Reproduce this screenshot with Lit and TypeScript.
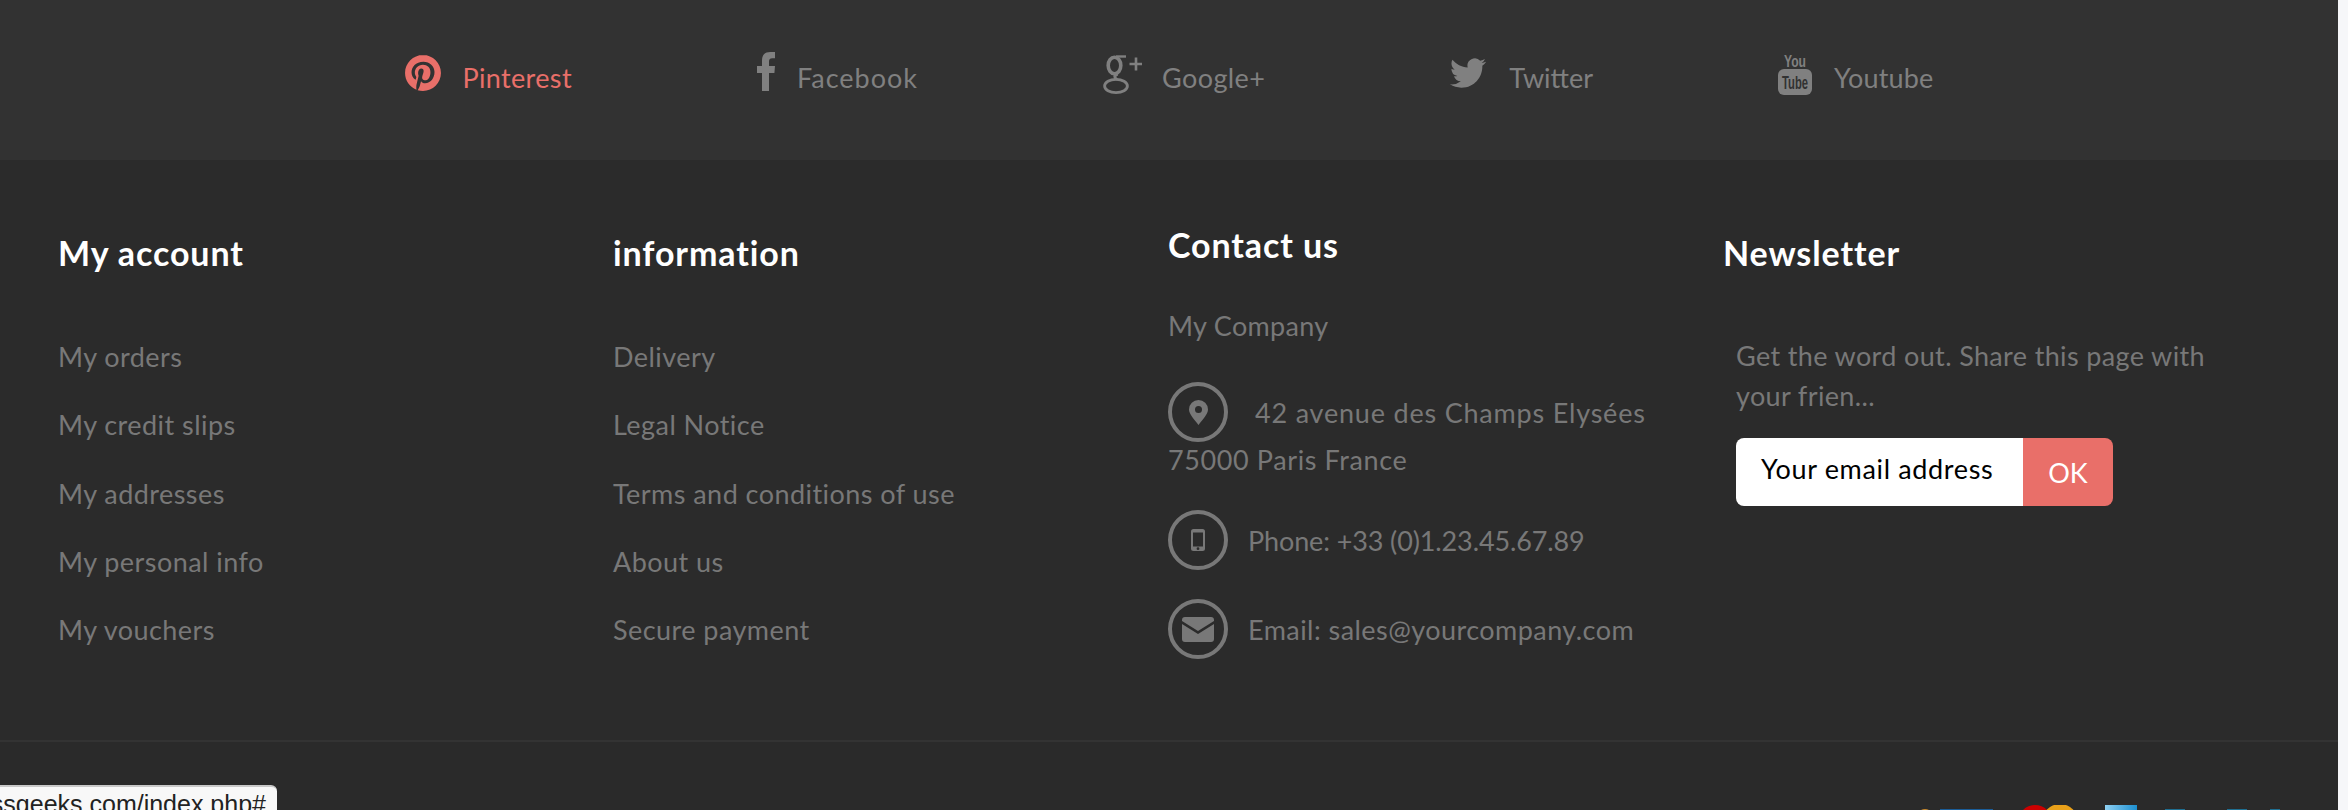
import { LitElement, html, css, svg } from "lit";
import { customElement } from "lit/decorators.js";

const pinterest = svg`<path d="M12.017 0C5.396 0 .029 5.367.029 11.987c0 5.079 3.158 9.417 7.618 11.162-.105-.949-.199-2.403.041-3.439.219-.937 1.406-5.957 1.406-5.957s-.359-.72-.359-1.781c0-1.663.967-2.911 2.168-2.911 1.024 0 1.518.769 1.518 1.688 0 1.029-.653 2.567-.992 3.992-.285 1.193.6 2.165 1.775 2.165 2.128 0 3.768-2.245 3.768-5.487 0-2.861-2.063-4.869-5.008-4.869-3.41 0-5.409 2.562-5.409 5.199 0 1.033.394 2.143.889 2.741.099.12.112.225.085.345-.09.375-.293 1.199-.334 1.363-.053.225-.172.271-.401.165-1.495-.69-2.433-2.878-2.433-4.646 0-3.776 2.748-7.252 7.92-7.252 4.158 0 7.392 2.967 7.392 6.923 0 4.135-2.607 7.462-6.233 7.462-1.214 0-2.354-.629-2.758-1.379l-.749 2.848c-.269 1.045-1.004 2.352-1.498 3.146 1.123.345 2.306.535 3.55.535 6.607 0 11.985-5.365 11.985-11.987C23.97 5.39 18.592.026 11.985.026L12.017 0z"/>`;
const twitter = svg`<path d="M23.953 4.57a10 10 0 01-2.825.775 4.958 4.958 0 002.163-2.723c-.951.555-2.005.959-3.127 1.184a4.92 4.92 0 00-8.384 4.482C7.69 8.095 4.067 6.13 1.64 3.162a4.822 4.822 0 00-.666 2.475c0 1.71.87 3.213 2.188 4.096a4.904 4.904 0 01-2.228-.616v.06a4.923 4.923 0 003.946 4.827 4.996 4.996 0 01-2.212.085 4.936 4.936 0 004.604 3.417 9.867 9.867 0 01-6.102 2.105c-.39 0-.779-.023-1.17-.067a13.995 13.995 0 007.557 2.209c9.053 0 13.998-7.496 13.998-13.985 0-.21 0-.42-.015-.63A9.935 9.935 0 0024 4.59z"/>`;

const socials = [
  { name: "Pinterest", cls: "pin", active: true, w: 36, h: 36, vb: "0 0 24 24", gap: 22, ls: 0.35, body: pinterest },
  { name: "Facebook", cls: "fb", active: false, w: 18, h: 39, vb: "0 0 18 39", gap: 22, ls: 1,
    body: svg`<path d="M12 39V21h5.4l.6-7h-6V9.6c0-2.100.6-3.400 3.300-3.400H18V0h-4.600C7.500 0 5 3.200 5 8.600V14H0v7h5v18z"/>` },
  { name: "Google+", cls: "gp", active: false, w: 39, h: 39, vb: "0 0 39 39", gap: 20, ls: 0.4,
    body: svg`<g fill="none" stroke="currentColor">
      <ellipse cx="11.500" cy="10.500" rx="6.300" ry="8.300" stroke-width="3.600"/>
      <path d="M13 1.500h10" stroke-width="2.400"/>
      <path d="M14.500 19c-3.500 1.500-3.500 3.800-.5 5.500" stroke-width="3"/>
      <ellipse cx="13" cy="31" rx="11.400" ry="6.600" stroke-width="2.800"/>
      <path d="M33 2.500v13M26.500 9h12.500" stroke-width="2.600"/>
    </g>` },
  { name: "Twitter", cls: "tw", active: false, w: 36, h: 30, vb: "0 0 24 20", gap: 23, ls: 0,
    body: svg`<g transform="translate(0 -2)">${twitter}</g>` },
  { name: "Youtube", cls: "yt", active: false, w: 34, h: 43, vb: "0 0 34 43", gap: 22, ls: 0.15,
    body: svg`<text x="6" y="15" class="yt-you" textLength="22" lengthAdjust="spacingAndGlyphs">You</text>
      <rect x="0" y="17" width="34" height="26" rx="6"/>
      <text x="4" y="37" class="yt-tube" textLength="26" lengthAdjust="spacingAndGlyphs">Tube</text>` },
];

const accountLinks = ["My orders", "My credit slips", "My addresses", "My personal info", "My vouchers"];
const infoLinks = ["Delivery", "Legal Notice", "Terms and conditions of use", "About us", "Secure payment"];

@customElement("app-root")
export class AppRoot extends LitElement {
  static styles = css`
    :host {
      display: flex;
      width: 2348px;
      height: 810px;
      overflow: hidden;
      position: relative;
      font-family: "Lato", "Liberation Sans", sans-serif;
      font-size: 27px;
      color: #787878;
      background: #2a2a2a;
    }
    .page { width: 2338px; flex: none; display: flex; flex-direction: column; height: 810px; overflow: hidden; }
    .rail { flex: 1; background: #f6f7f9; }

    .social {
      height: 160px;
      flex: none;
      box-sizing: border-box;
      background: #323232;
      display: flex;
      justify-content: center;
      gap: 185px;
      padding-top: 52px;
    }
    .s-item { display: flex; align-items: flex-start; color: #808080; }
    .s-item.active { color: #e96f69; }
    .s-item svg { display: block; flex: none; fill: currentColor; }
    .s-item span { line-height: 32px; margin-top: 10px; }
    svg.pin { margin-top: 3px; }
    svg.gp { margin-top: 3px; }
    svg.tw { margin-top: 6px; }
    svg.yt { margin-top: 0; }
    .yt-you { font: bold 17px "Liberation Sans Narrow", "Liberation Sans", sans-serif; fill: #808080; }
    .yt-tube { font: bold 19px "Liberation Sans", sans-serif; fill: #323232; }

    .cols {
      height: 580px;
      flex: none;
      box-sizing: border-box;
      background: #2b2b2b;
      padding-left: 58px;
      display: grid;
      grid-template-columns: repeat(4, 555px);
    }
    h3 {
      margin: 0;
      font-size: 34px;
      font-weight: 700;
      line-height: 40px;
      letter-spacing: 0.9px;
      color: #ffffff;
    }
    .col { padding-top: 73px; }
    .col.contact { padding-top: 65px; }
    ul { list-style: none; margin: 66px 0 0; padding: 0; }
    li { height: 68.3px; line-height: 36px; letter-spacing: 0.45px; }

    .company { margin-top: 43px; line-height: 36px; letter-spacing: 0.3px; }
    .row { display: flex; align-items: center; }
    .ring {
      width: 60px;
      height: 60px;
      box-sizing: border-box;
      border: 4px solid #787878;
      border-radius: 50%;
      flex: none;
      display: flex;
      align-items: center;
      justify-content: center;
    }
    .ring svg { display: block; fill: #787878; }
    .addr { margin-top: 38px; }
    .addr .row span { margin-left: 27px; letter-spacing: 0.8px; }
    .addr .line2 { line-height: 36px; letter-spacing: 0.6px; }
    .phone { margin-top: 32px; }
    .mail { margin-top: 29px; }
    .phone span, .mail span { margin-left: 20px; }
    .phone span { letter-spacing: -0.12px; }
    .mail span { letter-spacing: 0.45px; }

    .news-body { padding-left: 13px; margin-top: 63px; }
    .news-body p { margin: 0; width: 490px; line-height: 40px; letter-spacing: 0.36px; }
    .form { display: flex; margin-top: 22px; width: 377px; height: 68px; border-radius: 8px; overflow: hidden; }
    .field {
      width: 287px;
      box-sizing: border-box;
      background: #fff;
      color: #000;
      padding-left: 25px;
      line-height: 62px;
      letter-spacing: 0.65px;
    }
    .ok {
      flex: 1;
      background: #e96f69;
      color: #fff;
      text-align: center;
      line-height: 70px;
    }

    .bottom {
      flex: 1;
      border-top: 2px solid #333333;
      background: #2a2a2a;
      display: flex;
      justify-content: flex-end;
      padding: 63px 0 0;
      box-sizing: border-box;
    }
    .pay { display: block; flex: none; }

    .tip {
      position: absolute;
      left: 0;
      top: 785px;
      width: 277px;
      height: 40px;
      box-sizing: border-box;
      background: #f8f8f8;
      border-top: 2px solid #c9c9c9;
      border-top-right-radius: 6px;
      color: #222;
      font: 25px "Liberation Sans", sans-serif;
      white-space: nowrap;
      overflow: hidden;
      display: flex;
      justify-content: flex-end;
      padding: 3px 11px 0 0;
    }
  `;

  render() {
    return html`
      <div class="page">
        <div class="social">
          ${socials.map(
            (s) => html`<div class="s-item ${s.active ? "active" : ""}">
              <svg class=${s.cls} width=${s.w} height=${s.h} viewBox=${s.vb}>${s.body}</svg>
              <span style="margin-left:${s.gap}px;letter-spacing:${s.ls}px">${s.name}</span>
            </div>`
          )}
        </div>
        <div class="cols">
          <div class="col">
            <h3>My account</h3>
            <ul>${accountLinks.map((l) => html`<li>${l}</li>`)}</ul>
          </div>
          <div class="col">
            <h3>information</h3>
            <ul>${infoLinks.map((l) => html`<li>${l}</li>`)}</ul>
          </div>
          <div class="col contact">
            <h3>Contact us</h3>
            <div class="company">My Company</div>
            <div class="addr">
              <div class="row">
                <div class="ring">
                  <svg width="19" height="25" viewBox="0 0 19 25"><path fill-rule="evenodd" d="M9.500 0A9.500 9.500 0 0 0 0 9.500C0 14 5 19 9.500 25 14 19 19 14 19 9.500A9.500 9.500 0 0 0 9.500 0zm0 6a3.500 3.500 0 1 1 0 7 3.500 3.500 0 0 1 0-7z"/></svg>
                </div>
                <span>42 avenue des Champs Elysées</span>
              </div>
              <div class="line2">75000 Paris France</div>
            </div>
            <div class="row phone">
              <div class="ring">
                <svg width="14" height="22" viewBox="0 0 14 22"><path fill-rule="evenodd" d="M2.500 0h9A2.500 2.500 0 0 1 14 2.500v17a2.500 2.500 0 0 1-2.500 2.500h-9A2.500 2.500 0 0 1 0 19.500v-17A2.500 2.500 0 0 1 2.500 0zM2 3.500v14h10v-14zM7 18.300a1.400 1.400 0 1 0 0 2.800 1.400 1.400 0 0 0 0-2.800z"/></svg>
              </div>
              <span>Phone: +33 (0)1.23.45.67.89</span>
            </div>
            <div class="row mail">
              <div class="ring">
                <svg width="32" height="25" viewBox="0 0 32 25"><path d="M3 0h26a3 3 0 0 1 3 3v1L16 14 0 4V3a3 3 0 0 1 3-3zM0 7l16 10L32 7v15a3 3 0 0 1-3 3H3a3 3 0 0 1-3-3z"/></svg>
              </div>
              <span>Email: sales@yourcompany.com</span>
            </div>
          </div>
          <div class="col">
            <h3>Newsletter</h3>
            <div class="news-body">
              <p>Get the word out. Share this page with your frien...</p>
              <div class="form">
                <div class="field">Your email address</div>
                <div class="ok">OK</div>
              </div>
            </div>
          </div>
        </div>
        <div class="bottom">
          <svg class="pay" width="420" height="30" viewBox="0 0 420 30">
            <defs>
              <linearGradient id="amex" x1="0" x2="1" y1="0" y2="0">
                <stop offset="0" stop-color="#8fd0f2"/>
                <stop offset="1" stop-color="#1c8fd0"/>
              </linearGradient>
            </defs>
            <circle cx="7" cy="12" r="8" fill="#c98a2e"/>
            <rect x="22" y="4" width="53" height="20" fill="#1a5d99"/>
            <circle cx="117" cy="17" r="17" fill="#cc0000"/>
            <circle cx="142" cy="17" r="18" fill="#e9a019"/>
            <rect x="187" y="0" width="32" height="30" fill="url(#amex)"/>
            <path d="M247 4h20v20h-20zM309 4h20v20h-20zM352 4h10v20h-10z" fill="#1e6f92"/>
          </svg>
        </div>
      </div>
      <div class="rail"></div>
      <div class="tip">ssgeeks.com/index.php#</div>
    `;
  }
}
